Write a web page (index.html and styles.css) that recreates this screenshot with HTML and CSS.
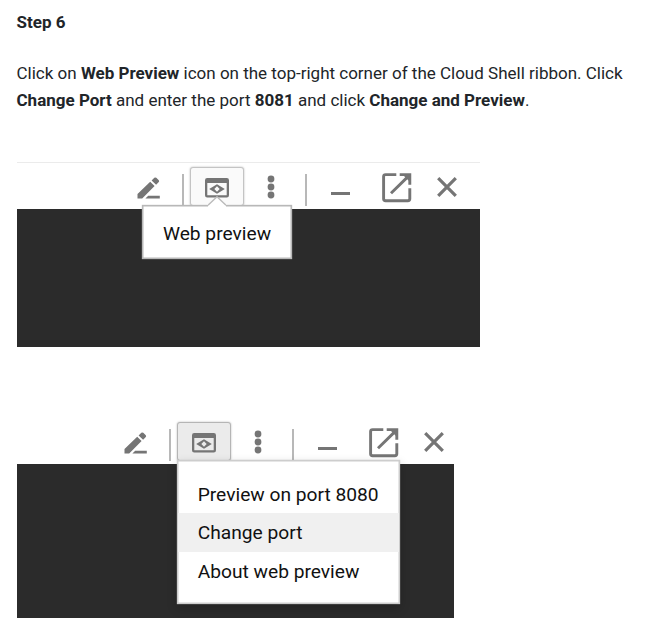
FILE: index.html
```html
<!DOCTYPE html>
<html lang="en">
<head>
<meta charset="utf-8">
<title>Step 6</title>
<link rel="stylesheet" href="styles.css">
</head>
<body>
<svg class="defs" aria-hidden="true">
  <symbol id="pencil" viewBox="0 0 24 24"><path d="M0.5 22.5V17.9L13.2 5.8 17.6 10 5.2 22.5ZM14.6 4.5 17.3 1.8Q18.3 1 19.3 1.8L21.8 4.3Q22.5 5.2 21.8 6.1L19.1 8.8ZM11.2 19.8H22.8V22.6H8.4Z"/></symbol>
  <symbol id="preview" viewBox="0 0 24 20"><path fill-rule="evenodd" d="M2.2 0H21.8Q24 0 24 2.2V17.3Q24 19.5 21.8 19.5H2.2Q0 19.5 0 17.3V2.2Q0 0 2.2 0ZM2.3 5V17.3H21.7V5ZM4.2 11 12 6.3 19.8 11 12 15.7ZM12 8.3 9.3 11 12 13.7 14.7 11Z"/></symbol>
  <symbol id="dots" viewBox="0 0 8 24"><circle cx="4" cy="4" r="3.4"/><circle cx="4" cy="12" r="3.4"/><circle cx="4" cy="20" r="3.4"/></symbol>
  <symbol id="open" viewBox="0 0 30 30"><path d="M14.3 1.6H3.6Q1.6 1.6 1.6 3.6V25.8Q1.6 27.7 3.6 27.7H25.8Q27.8 27.7 27.8 25.8V15.3M17.7 1.6H27.8V11.8M9 20.3 27 2.6" fill="none" stroke="currentColor" stroke-width="2.9"/><path d="M20 1H29V10Z"/></symbol>
  <symbol id="close" viewBox="0 0 20 20"><path d="M1.2 1.2 18.8 18.8M18.8 1.2 1.2 18.8" fill="none" stroke="currentColor" stroke-width="3.2"/></symbol>
</svg>
<main>
  <h1>Step 6</h1>
  <p>Click on <b>Web Preview</b> icon on the top-right corner of the Cloud Shell ribbon. Click <b>Change Port</b> and enter the port <b>8081</b> and click <b>Change and Preview</b>.</p>

  <section class="shell shell-hover">
    <div class="ribbon">
      <svg class="pencil"><use href="#pencil"/></svg>
      <i class="rule"></i>
      <div class="preview-button">
        <svg class="preview"><use href="#preview"/></svg>
        <div class="tooltip">Web preview<svg class="arrow" viewBox="0 0 18 11"><path d="M0 9.2 9 .8 18 9.2V11H0Z" fill="#fff"/><path d="M0 9.2 9 .8 18 9.2" fill="none" stroke="#bbb" stroke-width="1.4"/></svg></div>
      </div>
      <svg class="dots"><use href="#dots"/></svg>
      <i class="rule rule-second"></i>
      <i class="minimize"></i>
      <svg class="open"><use href="#open"/></svg>
      <svg class="close"><use href="#close"/></svg>
    </div>
    <div class="terminal"></div>
  </section>

  <section class="shell shell-menu">
    <div class="ribbon">
      <svg class="pencil"><use href="#pencil"/></svg>
      <i class="rule"></i>
      <div class="preview-button pressed">
        <svg class="preview"><use href="#preview"/></svg>
        <ul class="menu">
          <li>Preview on port 8080</li>
          <li class="selected">Change port</li>
          <li>About web preview</li>
        </ul>
      </div>
      <svg class="dots"><use href="#dots"/></svg>
      <i class="rule rule-second"></i>
      <i class="minimize"></i>
      <svg class="open"><use href="#open"/></svg>
      <svg class="close"><use href="#close"/></svg>
    </div>
    <div class="terminal"></div>
  </section>
</main>
</body>
</html>
```
FILE: styles.css
```css
* { box-sizing: border-box; }
body {
  margin: 0;
  background: #fff;
  color: #212529;
  font: 17px/27px Roboto, sans-serif;
}
.defs { display: none; }
main { padding: 9px 17px 0 16.5px; }
h1 { margin: 0 0 24px; font-size: 17px; line-height: 27px; font-weight: 700; }
p { margin: 0 -17px 48px 0; padding-right: 30px; }
b { font-weight: 700; }

.shell { margin-left: .5px; }
.shell-hover { width: 463px; margin-bottom: 70px; }
.shell-menu { width: 437px; }
.ribbon {
  display: flex;
  align-items: flex-start;
  height: 47px;
  padding-left: 120px;
  border-top: 1px solid #ebebeb;
  color: #757575;
}
.shell-menu .ribbon { padding-left: 107px; border-top-color: transparent; }
.ribbon svg { display: block; flex: none; fill: currentColor; }
.terminal { height: 138px; background: #2b2b2b; }
.shell-menu .terminal { height: 154px; }

.pencil { width: 24px; height: 24px; margin-top: 12.5px; }
.rule { width: 1.5px; height: 32px; margin: 10.5px .5px 0 21px; background: #b8b8b8; }
.rule-second { margin-left: 30px; }
.preview-button {
  position: relative;
  display: flex;
  justify-content: center;
  width: 54px;
  height: 39px;
  margin: 4px 0 0 6px;
  padding-top: 9.5px;
  border: 1px solid #c4c4c4;
  border-radius: 3px;
  background: #fafafa;
  box-shadow: 0 0 2px rgba(0, 0, 0, .3);
}
.preview-button.pressed { background: #ebebeb; border-color: #b5b5b5; }
.preview { width: 24px; height: 20px; }
.dots { width: 8px; height: 24px; margin: 12.3px 0 0 23px; }
.minimize { width: 19px; height: 3px; margin: 29px 0 0 24px; background: #757575; }
.open { width: 30px; height: 30px; margin: 10.3px 0 0 31.7px; }
.close { width: 20px; height: 20px; margin: 14.3px 0 0 25.5px; }

.tooltip, .menu {
  position: absolute;
  z-index: 1;
  background: #fff;
  color: #111;
  font-size: 19.2px;
  white-space: nowrap;
}
.tooltip {
  top: 37px;
  left: -49px;
  width: 150px;
  height: 54px;
  border: 1px solid #b8b8b8;
  box-shadow: inset 0 0 0 .5px #b8b8b8, 0 0 1px #b8b8b8;
  line-height: 55px;
  text-align: center;
}
.tooltip .arrow { position: absolute; top: -10px; left: 65px; width: 18px; height: 11px; }
.menu {
  top: 37px;
  left: -1px;
  width: 223px;
  height: 144px;
  margin: 0;
  padding: 14px 0 0;
  border: 1.5px solid #cdcdcd;
  box-shadow: inset 0 0 0 .5px #cdcdcd, 0 0 1px #bbb, 0 4px 10px rgba(0, 0, 0, .2);
  list-style: none;
}
.menu li { height: 38.4px; padding-left: 19.7px; line-height: 40px; }
.menu .selected { background: #f0f0f0; }
```
